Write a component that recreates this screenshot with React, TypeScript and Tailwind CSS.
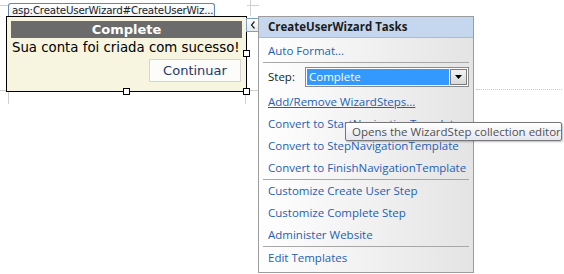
import React from "react";

const seg = { fontFamily: '"Open Sans", "Noto Sans", sans-serif' };
const ver = { fontFamily: '"DejaVu Sans", Verdana, sans-serif' };

function Item({ children, underline }: { children: React.ReactNode; underline?: boolean }) {
  return (
    <div className="h-[22px] flex items-center pl-[9px]">
      <span className={"text-[11.5px] text-[#1f5fb4] whitespace-nowrap " + (underline ? "underline" : "")}>{children}</span>
    </div>
  );
}

function Sep() {
  return <div className="mx-[4px] h-px bg-[#a8a8a8]" />;
}

function Handle({ x, y }: { x: number; y: number }) {
  return (
    <div
      className="absolute w-[7px] h-[7px] bg-white border border-black"
      style={{ left: x - 3, top: y - 3 }}
    />
  );
}

export default function App() {
  return (
    <div className="relative w-[564px] h-[274px] bg-white overflow-hidden">
      {/* guide lines */}
      <div className="absolute left-0 top-[5px] w-[8px] h-px bg-[#d0d0d0]" />
      <div className="absolute left-[250px] top-0 w-px h-[16px] bg-[#d0d0d0]" />
      <div className="absolute left-[247px] top-[5px] w-[12px] h-px bg-[#d0d0d0]" />
      <div className="absolute left-0 top-[90px] w-[6px] h-px bg-[#d0d0d0]" />
      <div className="absolute left-[8px] top-[92px] w-px h-[12px] bg-[#d0d0d0]" />
      <div className="absolute left-[245px] top-[94px] w-px h-[10px] bg-[#d0d0d0]" />
      <div className="absolute left-[249px] top-[90px] w-[9px] h-px bg-[#d0d0d0]" />
      <div className="absolute left-[476px] top-[89px] w-[86px] h-px border-t border-dotted border-[#c8c8c8]" />

      {/* tab */}
      <div
        className="absolute left-[8px] top-[3px] w-[207px] h-[14px] border border-b-0 border-[#5e86b8] rounded-t-[3px] bg-gradient-to-b from-white to-[#eef2f8] flex items-center pl-[3px] overflow-hidden"
        style={ver}
      >
        <span className="text-[10.3px] leading-none text-[#222] whitespace-nowrap tracking-[-0.2px]">asp:CreateUserWizard#CreateUserWiz...</span>
      </div>

      {/* control */}
      <div className="absolute left-[6px] top-[16px] w-[241px] h-[76px] border border-black bg-[#f7f5df] p-[4px] flex flex-col" style={ver}>
        <div className="h-[17px] bg-[#6b6b6b] flex items-center justify-center">
          <span className="text-[13px] font-bold text-white leading-none">Complete</span>
        </div>
        <div className="h-[20px] flex items-center pl-[1px]">
          <span className="text-[13.3px] text-black whitespace-nowrap leading-none">Sua conta foi criada com sucesso!</span>
        </div>
        <div className="flex justify-end pr-[1px] pt-[1px]">
          <div className="w-[92px] h-[23px] border border-[#d4d4d4] bg-[#fcfcfa] flex items-center justify-center">
            <span className="text-[13px] text-[#26386a] leading-none">Continuar</span>
          </div>
        </div>
      </div>
      <Handle x={246} y={53} />
      <Handle x={126} y={91} />
      <Handle x={246} y={91} />

      {/* smart tag */}
      <div className="absolute left-[246px] top-[18px] w-[13px] h-[14px] border border-[#7e9fc4] bg-gradient-to-b from-white to-[#e3e9f2] flex items-center justify-center">
        <svg width="6" height="8" viewBox="0 0 6 8">
          <path d="M4.5 0.5 L1.5 4 L4.5 7.5" fill="none" stroke="#222" strokeWidth="1.2" />
        </svg>
      </div>

      {/* task panel */}
      <div className="absolute left-[258px] top-[16px] w-[216px] h-[257px] border border-[#9c9c9c] bg-gradient-to-r from-white to-[#e4e4e4] flex flex-col" style={seg}>
        <div className="h-[21px] bg-[#c5d7ee] border-b border-[#a9bad2] flex items-center pl-[9px]">
          <span className="text-[11.5px] font-bold text-[#1b1b1b] whitespace-nowrap">CreateUserWizard Tasks</span>
        </div>
        <div className="pt-[2px]">
          <Item>Auto Format...</Item>
        </div>
        <Sep />
        <div className="mt-[3px] h-[22px] flex items-center pl-[9px]">
          <span className="text-[11.5px] text-[#1b1b1b] w-[37px]">Step:</span>
          <div className="w-[164px] h-[20px] border border-[#8a8a8a] bg-white p-px flex">
            <div className="flex-1 bg-[#3399ff] flex items-center pl-[2px]">
              <span className="text-[11.5px] text-white leading-none">Complete</span>
            </div>
            <div className="w-[17px] ml-px border border-[#7a7a7a] bg-gradient-to-b from-[#f2f2f2] to-[#d9d9d9] flex items-center justify-center">
              <svg width="7" height="4" viewBox="0 0 7 4">
                <path d="M0 0 H7 L3.5 4 Z" fill="#000" />
              </svg>
            </div>
          </div>
        </div>
        <div className="mt-[3px]">
          <Item underline>Add/Remove WizardSteps...</Item>
          <Item>Convert to StartNavigationTemplate</Item>
          <Item>Convert to StepNavigationTemplate</Item>
          <Item>Convert to FinishNavigationTemplate</Item>
        </div>
        <Sep />
        <Item>Customize Create User Step</Item>
        <Item>Customize Complete Step</Item>
        <Item>Administer Website</Item>
        <Sep />
        <Item>Edit Templates</Item>
      </div>

      {/* tooltip */}
      <div
        className="absolute left-[345px] top-[122px] w-[217px] h-[19px] border border-[#767676] rounded-[2px] bg-gradient-to-b from-white to-[#e6e7ef] shadow-[1px_1px_2px_rgba(0,0,0,0.25)] flex items-center pl-[6px]"
        style={seg}
      >
        <span className="text-[11.5px] text-[#505050] whitespace-nowrap leading-none">Opens the WizardStep collection editor</span>
      </div>
    </div>
  );
}
